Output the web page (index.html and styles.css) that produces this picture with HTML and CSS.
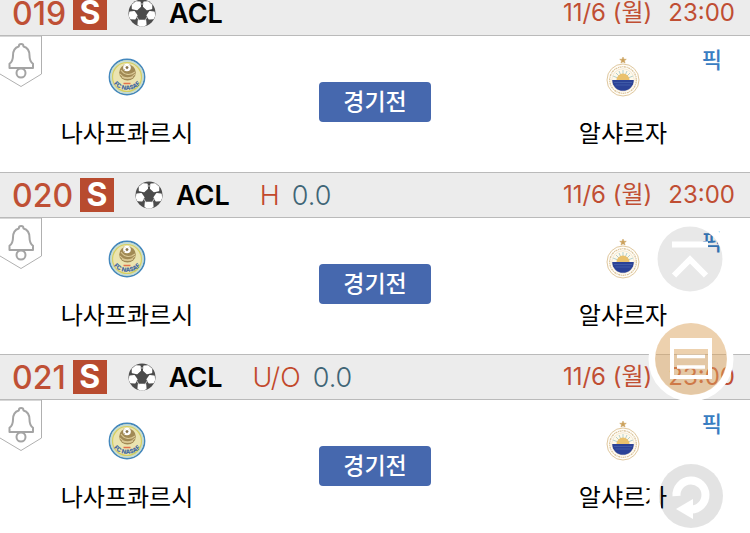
FILE: index.html
```html
<!DOCTYPE html>
<html lang="ko">
<head>
<meta charset="utf-8">
<meta name="viewport" content="width=device-width, initial-scale=1">
<title>ACL</title>
<link rel="stylesheet" href="styles.css">
</head>
<body>
<svg class="defs" aria-hidden="true">
  <symbol id="ball" viewBox="0 0 28 28">
    <circle cx="14" cy="14" r="13.500" fill="#4c4c4c"/>
    <g fill="#fff" stroke="#fff" stroke-width="1.500" stroke-linejoin="round">
      <path d="M4.500 6 8 3 12 3.200 12.300 7.500 9 10.500 4.500 9.500z"/>
      <path d="M23.500 6 20 3 16 3.200 15.700 7.500 19 10.500 23.500 9.500z"/>
      <path d="M2 13.200 6.200 12.800 8.800 16.500 6.800 19.800 2.800 19.500 1.600 17z"/>
      <path d="M26 13.200 21.800 12.800 19.200 16.500 21.200 19.800 25.200 19.500 26.400 17z"/>
      <path d="M10.500 21.500h7l.3 4-2 1.200h-3.600l-2-1.200z"/>
    </g>
    <path d="M12.500 5h3M8.500 17.500l2.500 4M19.500 17.500l-2.500 4" stroke="#c8c8c8" stroke-width="1"/>
  </symbol>
  <symbol id="bell" viewBox="0 0 42 52">
    <path d="M0 0H41.500V38L21 50.500 0 38" fill="#fff" stroke="#b0b0b0"/>
    <path d="M18.800 10.500C18.800 7.200 23.500 7.200 23.500 10.500C28 11.800 29.500 15 29.500 19.500C29.500 24 30.500 26 33 27.800V32H9.500V27.800C12 26 13 24 13 19.500C13 15 14.500 11.800 18.800 10.500Z" fill="none" stroke="#a4a4a4" stroke-width="2" stroke-linejoin="round"/>
    <circle cx="21" cy="37" r="4.500" fill="#fff" stroke="#a4a4a4" stroke-width="2"/>
  </symbol>
  <symbol id="nasaf" viewBox="0 0 40 40">
    <circle cx="20" cy="20" r="17.600" fill="#e6dfad" stroke="#4387bd" stroke-width="1.600"/>
    <circle cx="20" cy="20" r="15.900" fill="none" stroke="#c2dcd8" stroke-width="1.600"/>
    <circle cx="20" cy="20" r="14.500" fill="#ebe4b0" stroke="#d5cf62" stroke-width="1.200"/>
    <ellipse cx="20.500" cy="15.500" rx="8.300" ry="8" fill="#a18a55"/>
    <path d="M13 17c4 5 11 5 15 0M14 13c3 5 9 6 14 2M15 20c3 2 8 2 11 0" fill="none" stroke="#dac895" stroke-width="1.100"/>
    <circle cx="20" cy="10.500" r="3.800" fill="#fff"/>
    <path d="M19.200 9.500h1.600l.5 1.500-1.300 1-1.300-1zM17 7.500l1 1M23 7.500l-1 1M17 13l1-1" fill="#87724b" stroke="#87724b" stroke-width=".5"/>
    <path d="M16.500 26.500h7" stroke="#e2734c" stroke-width="1.500"/>
    <path id="nasaf-arc" d="M5 24C11 36 29 36 35 24" fill="none"/>
    <text class="crest-text"><textPath href="#nasaf-arc" startOffset="50%" text-anchor="middle">FC NASAF</textPath></text>
  </symbol>
  <symbol id="sharjah" viewBox="0 0 40 40">
    <path d="M20 0l.9 2.200 2.400.1-1.900 1.500.7 2.300L20 4.800l-2.100 1.300.7-2.300-1.900-1.500 2.400-.1z" fill="#cba05b" stroke="#cba05b" stroke-width=".5"/>
    <circle cx="20" cy="23" r="16" fill="#fffdf8" stroke="#e0c89f" stroke-width="1"/>
    <circle cx="20" cy="23" r="13.300" fill="none" stroke="#dcc59c" stroke-width="1.300" stroke-dasharray="1 .6 2 .8"/>
    <circle cx="20" cy="23" r="11.300" fill="#fff9ea" stroke="#ecdcc0" stroke-width=".6"/>
    <path d="M20 23V13M20 23l-4-9M20 23l4-9M20 23l-7-7M20 23l7-7M20 23l-10-4M20 23l10-4" stroke="#b3d0cf" stroke-width="1"/>
    <path d="M13.500 23a6.500 6.500 0 0 1 13 0z" fill="#eac16c"/>
    <path d="M9.200 23h21.600a10.800 10.800 0 0 1-21.600 0z" fill="#2b4297"/>
    <path d="M11 25.500h18M12.500 28h15" stroke="#405ba7" stroke-width="1"/>
  </symbol>
</svg>

<main class="matches">
  <article class="match">
    <header class="bar">
      <span class="number">019</span><span class="tag">S</span>
      <svg class="ball"><use href="#ball"/></svg>
      <span class="league">ACL</span>
      <time class="when"><span>11/6 (월)</span><span>23:00</span></time>
    </header>
    <div class="fixture">
      <button class="alarm" aria-label="알림"><svg><use href="#bell"/></svg></button>
      <div class="team"><svg class="crest"><use href="#nasaf"/></svg><span>나사프콰르시</span></div>
      <button class="status">경기전</button>
      <div class="team"><svg class="crest"><use href="#sharjah"/></svg><span>알샤르자</span></div>
      <a class="pick" href="#">픽</a>
    </div>
  </article>
  <article class="match">
    <header class="bar">
      <span class="number">020</span><span class="tag">S</span>
      <svg class="ball"><use href="#ball"/></svg>
      <span class="league">ACL</span>
      <span class="line"><span class="kind">H</span><span class="value">0.0</span></span>
      <time class="when"><span>11/6 (월)</span><span>23:00</span></time>
    </header>
    <div class="fixture">
      <button class="alarm" aria-label="알림"><svg><use href="#bell"/></svg></button>
      <div class="team"><svg class="crest"><use href="#nasaf"/></svg><span>나사프콰르시</span></div>
      <button class="status">경기전</button>
      <div class="team"><svg class="crest"><use href="#sharjah"/></svg><span>알샤르자</span></div>
      <a class="pick" href="#">픽</a>
    </div>
  </article>
  <article class="match">
    <header class="bar">
      <span class="number">021</span><span class="tag">S</span>
      <svg class="ball"><use href="#ball"/></svg>
      <span class="league">ACL</span>
      <span class="line"><span class="kind">U/O</span><span class="value">0.0</span></span>
      <time class="when"><span>11/6 (월)</span><span>23:00</span></time>
    </header>
    <div class="fixture">
      <button class="alarm" aria-label="알림"><svg><use href="#bell"/></svg></button>
      <div class="team"><svg class="crest"><use href="#nasaf"/></svg><span>나사프콰르시</span></div>
      <button class="status">경기전</button>
      <div class="team"><svg class="crest"><use href="#sharjah"/></svg><span>알샤르자</span></div>
      <a class="pick" href="#">픽</a>
    </div>
  </article>
</main>

<button class="fab fab-top" aria-label="맨 위로">
  <svg viewBox="0 0 86 86">
    <circle cx="43" cy="43" r="36" fill="none" stroke="#fff" stroke-width="8"/>
    <circle cx="43" cy="43" r="32.500" fill="#000" fill-opacity=".09"/>
    <path d="M25 28.500h36M27 59.500l16-16 16 16" fill="none" stroke="#fff" stroke-width="6"/>
  </svg>
</button>
<button class="fab fab-list" aria-label="목록">
  <svg viewBox="0 0 86 86">
    <circle cx="43" cy="43" r="39" fill="none" stroke="#fff" stroke-width="7"/>
    <circle cx="43" cy="43" r="36" fill="#dba35d" fill-opacity=".5"/>
    <path fill-rule="evenodd" d="M22 22h42v41H22zM26 33v26h34V33z" fill="#fff"/>
    <path d="M29 40.500h28M29 51h28" stroke="#fff" stroke-width="3.500"/>
  </svg>
</button>
<button class="fab fab-refresh" aria-label="새로고침">
  <svg viewBox="0 0 86 86">
    <circle cx="43" cy="43" r="37" fill="none" stroke="#fff" stroke-width="10"/>
    <circle cx="43" cy="43" r="32" fill="#000" fill-opacity=".11"/>
    <path d="M28.500 43A14.500 14.500 0 1 1 43 56.500" fill="none" stroke="#fff" stroke-width="8"/>
    <path d="M28 56l17-10v20z" fill="#fff"/>
  </svg>
</button>
</body>
</html>
```

FILE: styles.css
```css
* {
  box-sizing: border-box;
}

body {
  margin: 0;
  overflow: hidden;
  background: #fff;
  color: #000;
  font-family: Inter, "Noto Sans CJK KR", sans-serif;
}

button {
  padding: 0;
  border: 0;
  background: none;
  font: inherit;
  cursor: pointer;
}

svg {
  display: block;
}

.defs {
  position: absolute;
  width: 0;
  height: 0;
}

.crest-text {
  fill: #4168a1;
  font-family: Inter, sans-serif;
  font-size: 6px;
  font-weight: 800;
}

.matches {
  margin-top: -10px;
}

.bar {
  display: flex;
  align-items: center;
  height: 46px;
  padding: 0 15px 0 12px;
  border-top: 1px solid #bababa;
  border-bottom: 1px solid #bababa;
  background: #ececec;
  white-space: nowrap;
}

.number {
  color: #bf5035;
  font-size: 32px;
  font-weight: 500;
}

.tag {
  width: 34px;
  margin-left: 7px;
  background: #b84b2f;
  color: #fff;
  font-size: 32px;
  font-weight: 700;
  line-height: 34px;
  text-align: center;
}

.ball {
  width: 28px;
  height: 28px;
  margin: 0 13px 0 21px;
}

.league {
  font-size: 27px;
  font-weight: 600;
}

.line {
  display: flex;
  gap: 12px;
  margin-left: 30px;
  font-size: 27px;
  font-weight: 300;
}

.kind {
  color: #c2492b;
}

.value {
  color: #3f6576;
}

.when {
  display: flex;
  align-items: baseline;
  gap: 16px;
  margin-left: auto;
  color: #c04e33;
  font-size: 24px;
  line-height: 32px;
}

.fixture {
  position: relative;
  display: grid;
  grid-template-columns: 21fr 20fr 21fr;
  height: 136px;
}

.alarm {
  position: absolute;
  top: 0;
  left: 0;
}

.alarm svg {
  width: 42px;
  height: 52px;
}

.team {
  display: flex;
  flex-direction: column;
  align-items: center;
  gap: 21px;
  padding-top: 21px;
  font-size: 24px;
  line-height: 32px;
}

.crest {
  width: 40px;
  height: 40px;
}

.status {
  align-self: start;
  justify-self: center;
  width: 112px;
  height: 40px;
  margin-top: 46px;
  border-radius: 4px;
  background: #4668ae;
  color: #fff;
  font-size: 23px;
  font-weight: 500;
  line-height: 40px;
}

.pick {
  position: absolute;
  top: 8px;
  right: 28px;
  color: #397dc2;
  font-size: 22px;
  font-weight: 500;
  line-height: 32px;
  text-decoration: none;
}

.fab {
  position: fixed;
  width: 86px;
  height: 86px;
  border-radius: 50%;
}

.fab-top {
  right: 17px;
  bottom: 231px;
}

.fab-list {
  right: 16px;
  bottom: 131px;
}

.fab-refresh {
  right: 16px;
  bottom: -6px;
}
```
